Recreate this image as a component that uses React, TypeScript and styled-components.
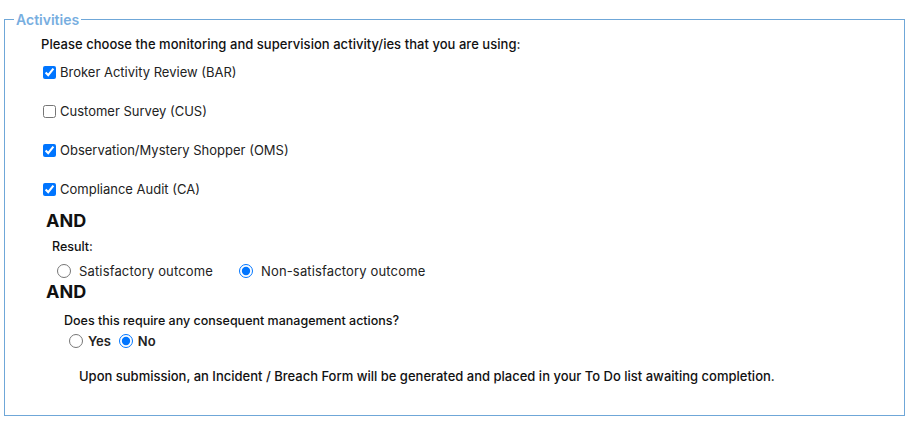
import React from "react";
import styled, { createGlobalStyle } from "styled-components";

const Global = createGlobalStyle`
  html, body { margin: 0; padding: 0; background: #fff; }
  body { font-family: Inter, "Noto Sans", sans-serif; color: #111; }
`;

const Page = styled.div`
  padding: 11px 10px 0 4px;
  width: 915px;
  box-sizing: border-box;
`;

const Fieldset = styled.fieldset`
  margin: 0;
  border: 1px solid #6fa7d8;
  padding: 7px 0 0 36px;
  height: 405px;
  box-sizing: border-box;
  width: 901px;
`;

const Legend = styled.legend`
  margin-left: -27px;
  padding: 0 2px;
  color: #78aedf;
  font-size: 14px;
  font-weight: 600;
`;

const Intro = styled.div`
  font-size: 13px;
  font-weight: 500;
  margin: 0 0 10px 0;
  line-height: 18px;
  letter-spacing: 0.04px;
`;

const CheckList = styled.div`
  display: flex;
  flex-direction: column;
  gap: 21px;
  margin-bottom: 13px;
`;

const CheckRow = styled.label`
  display: flex;
  align-items: center;
  height: 18px;
  font-size: 13px;
  color: #222;
  input { margin: 0 4px 0 2px; width: 13px; height: 13px; }
`;

const And = styled.div<{ $top: number }>`
  font-size: 18px;
  font-weight: 700;
  margin: ${(p) => p.$top}px 0 0 5px;
  line-height: 20px;
`;

const Sub = styled.div<{ $indent: number; $top: number }>`
  margin: ${(p) => p.$top}px 0 0 ${(p) => p.$indent}px;
  font-size: 12.5px;
  font-weight: 500;
  line-height: 18px;
`;

const RadioGroup = styled.div<{ $indent: number; $gap: number; $top: number }>`
  display: flex;
  align-items: center;
  gap: ${(p) => p.$gap}px;
  margin: ${(p) => p.$top}px 0 0 ${(p) => p.$indent}px;
  height: 22px;
`;

const RadioLabel = styled.label<{ $bold?: boolean }>`
  display: flex;
  align-items: center;
  font-size: 13px;
  font-weight: ${(p) => (p.$bold ? 600 : 400)};
  letter-spacing: ${(p) => (p.$bold ? 0 : 0.15)}px;
  color: #222;
  input {
    margin: 0 ${(p) => (p.$bold ? 5 : 8)}px 0 0;
    width: 14px;
    height: 14px;
  }
`;

const Note = styled.div`
  margin: 15px 0 0 38px;
  font-size: 13px;
  font-weight: 500;
  line-height: 18px;
`;

export default function App() {
  return (
    <Page>
      <Global />
      <Fieldset>
        <Legend>Activities</Legend>
        <Intro>Please choose the monitoring and supervision activity/ies that you are using:</Intro>
        <CheckList>
          <CheckRow><input type="checkbox" defaultChecked />Broker Activity Review (BAR)</CheckRow>
          <CheckRow><input type="checkbox" />Customer Survey (CUS)</CheckRow>
          <CheckRow><input type="checkbox" defaultChecked />Observation/Mystery Shopper (OMS)</CheckRow>
          <CheckRow><input type="checkbox" defaultChecked />Compliance Audit (CA)</CheckRow>
        </CheckList>
        <And $top={0}>AND</And>
        <Sub $indent={11} $top={7}>Result:</Sub>
        <RadioGroup $indent={16} $gap={26} $top={4}>
          <RadioLabel><input type="radio" name="result" />Satisfactory outcome</RadioLabel>
          <RadioLabel><input type="radio" name="result" defaultChecked />Non-satisfactory outcome</RadioLabel>
        </RadioGroup>
        <And $top={0}>AND</And>
        <Sub $indent={23} $top={10}>Does this require any consequent management actions?</Sub>
        <RadioGroup $indent={28} $gap={8} $top={0}>
          <RadioLabel $bold><input type="radio" name="mgmt" />Yes</RadioLabel>
          <RadioLabel $bold><input type="radio" name="mgmt" defaultChecked />No</RadioLabel>
        </RadioGroup>
        <Note>Upon submission, an Incident / Breach Form will be generated and placed in your To Do list awaiting completion.</Note>
      </Fieldset>
    </Page>
  );
}
